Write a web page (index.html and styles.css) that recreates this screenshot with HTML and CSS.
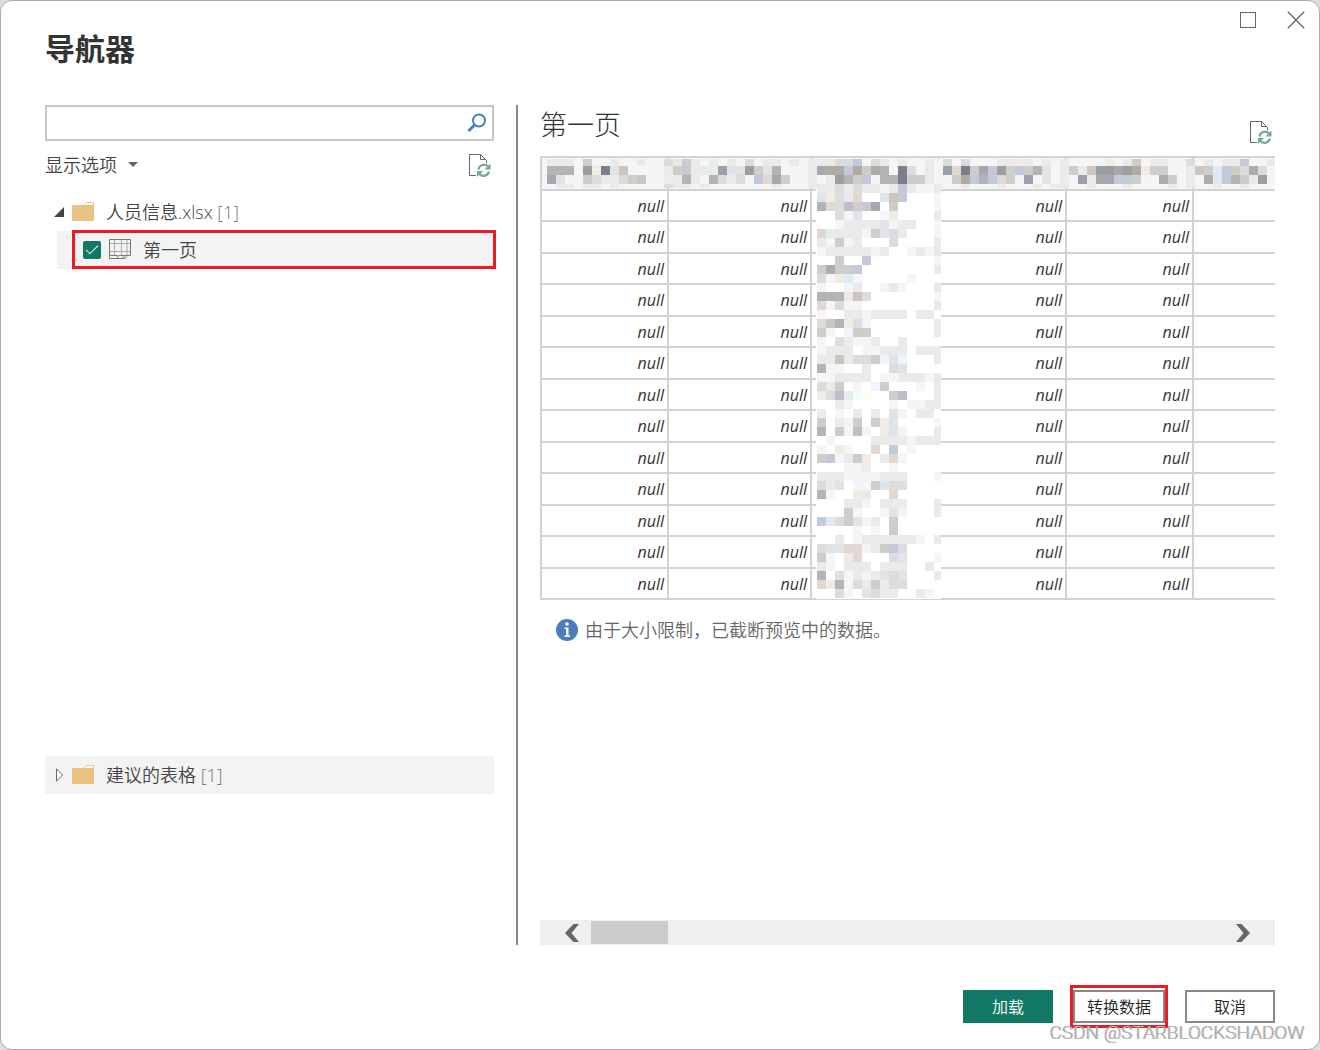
FILE: index.html
```html
<!DOCTYPE html>
<html lang="zh-CN">
<head>
<meta charset="utf-8">
<meta name="viewport" content="width=device-width, initial-scale=1">
<title>导航器</title>
<link rel="stylesheet" href="styles.css">
</head>
<body>
<svg class="defs" aria-hidden="true">
  <symbol id="folder" viewBox="0 0 22 19">
    <path d="M11.500 3.500 L14.500 .5 H21.500 V4" fill="#fff" stroke="#e9c282"/>
    <path d="M1 3 H12 L13 2.500 H22 V19 H0 V4 Z" fill="#e9c282"/>
    <path d="M12.500 2.800 L14.800 1 H21 V2.800 Z" fill="#fff"/>
  </symbol>
  <symbol id="refresh" viewBox="0 0 22 24">
    <path d="M7 22.500 H.5 V1.500 H11.500 L17.500 7.500 V10 M11.500 1.500 V6.500 H17" fill="none" stroke="#666"/>
    <path d="M9.500 16.500 A5.500 5.500 0 0 1 19 13.500 M20 18.500 A5.500 5.500 0 0 1 10.500 21" fill="none" stroke="#76a896" stroke-width="2.200"/>
    <path d="M21.500 10.500 V16.500 H15.500 Z M8 24 V18 H14 Z" fill="#76a896"/>
  </symbol>
</svg>
<div class="dialog">
  <header class="titlebar">
    <h1 class="title">导航器</h1>
    <div class="window-controls">
      <button class="icon-button" type="button" aria-label="最大化"><svg width="18" height="18"><rect x="1.500" y="1.500" width="15" height="15" fill="none" stroke="#666"/></svg></button>
      <button class="icon-button" type="button" aria-label="关闭"><svg width="18" height="18"><path d="M.8 .8 L17.200 17.200 M17.200 .8 L.8 17.200" fill="none" stroke="#666" stroke-width="1.300"/></svg></button>
    </div>
  </header>

  <main class="content">
    <section class="sources">
      <div class="search">
        <input class="search-input" type="text" aria-label="搜索">
        <button class="icon-button" type="button" aria-label="搜索"><svg width="20" height="20" fill="none" stroke="#4a7ebb"><circle cx="12" cy="7.500" r="6" stroke-width="2"/><path d="M7.500 12 L1.500 18" stroke-width="3"/></svg></button>
      </div>
      <div class="options">
        <button class="options-button" type="button">显示选项<svg width="10" height="6"><path d="M0 0 H10 L5 5 Z" fill="#666"/></svg></button>
        <button class="icon-button" type="button" aria-label="刷新"><svg width="22" height="24"><use href="#refresh"/></svg></button>
      </div>
      <div class="tree">
        <div class="node">
          <button class="icon-button" type="button" aria-label="折叠"><svg width="10" height="10"><path d="M10 0 V10 H0 Z" fill="#444"/></svg></button>
          <svg class="folder" width="22" height="19"><use href="#folder"/></svg>
          <span class="label">人员信息.xlsx <span class="count">[1]</span></span>
        </div>
        <div class="node-child">
          <div class="highlight">
            <input class="tick" type="checkbox" id="sheet1" checked>
            <svg width="22" height="21" fill="none" stroke="#777"><path d="M5.500 1 V16 M12.500 1 V17 M18 1 V16 M1 4.500 H21 M1 12.500 H21" stroke="#aaa"/><path d="M.5 .5 H21.500 V16.500 H18 L16 19.500 H13 M13 16.500 H18 M12.500 16.500 L10 16.500 L7 19.500 H.5 V.5 M1 16.500 H9 M7 19.500 H13 L16 16.500"/></svg>
            <label class="sheet-name" for="sheet1">第一页</label>
          </div>
        </div>
      </div>
      <div class="suggested">
        <div class="node node-shaded">
          <button class="icon-button" type="button" aria-label="展开"><svg width="10" height="14"><path d="M2.500 .8 L8.500 7 L2.500 13.200 Z" fill="#fff" stroke="#666"/></svg></button>
          <svg class="folder" width="22" height="19"><use href="#folder"/></svg>
          <span class="label">建议的表格 <span class="count">[1]</span></span>
        </div>
      </div>
    </section>

    <div class="divider"></div>

    <section class="preview">
      <div class="preview-head">
        <h2 class="preview-title">第一页</h2>
        <button class="icon-button" type="button" aria-label="刷新预览"><svg width="22" height="24"><use href="#refresh"/></svg></button>
      </div>
      <div class="table-wrap">
        <table class="grid">
          <colgroup><col class="w-edge"><col class="w-wide"><col class="w-masked"><col class="w-edge"><col class="w-edge"><col></colgroup>
          <thead><tr><th></th><th></th><th></th><th></th><th></th><th></th></tr></thead>
          <tbody>
            <tr><td>null</td><td>null</td><td></td><td>null</td><td>null</td><td></td></tr>
            <tr><td>null</td><td>null</td><td></td><td>null</td><td>null</td><td></td></tr>
            <tr><td>null</td><td>null</td><td></td><td>null</td><td>null</td><td></td></tr>
            <tr><td>null</td><td>null</td><td></td><td>null</td><td>null</td><td></td></tr>
            <tr><td>null</td><td>null</td><td></td><td>null</td><td>null</td><td></td></tr>
            <tr><td>null</td><td>null</td><td></td><td>null</td><td>null</td><td></td></tr>
            <tr><td>null</td><td>null</td><td></td><td>null</td><td>null</td><td></td></tr>
            <tr><td>null</td><td>null</td><td></td><td>null</td><td>null</td><td></td></tr>
            <tr><td>null</td><td>null</td><td></td><td>null</td><td>null</td><td></td></tr>
            <tr><td>null</td><td>null</td><td></td><td>null</td><td>null</td><td></td></tr>
            <tr><td>null</td><td>null</td><td></td><td>null</td><td>null</td><td></td></tr>
            <tr><td>null</td><td>null</td><td></td><td>null</td><td>null</td><td></td></tr>
            <tr><td>null</td><td>null</td><td></td><td>null</td><td>null</td><td></td></tr>
          </tbody>
        </table>
        <svg class="mosaic" id="mosaic" shape-rendering="crispEdges" aria-hidden="true"></svg>
      </div>
      <p class="notice">
        <svg width="22" height="22"><circle cx="11" cy="11" r="11" fill="#4a7ebb"/><circle cx="11" cy="5" r="1.800" fill="#fff"/><path d="M8.500 8.500 H12.500 V16.500 H14 V18 H8.500 V16.500 H10 V10 H8.500 Z" fill="#fff"/></svg>
        由于大小限制，已截断预览中的数据。
      </p>
      <div class="scrollbar">
        <button class="icon-button" type="button" aria-label="向左滚动"><svg width="14" height="18"><path d="M8.500 0 H14 L6.500 9 L14 18 H8.500 L0 9 Z" fill="#666"/></svg></button>
        <div class="thumb"></div>
        <button class="icon-button scroll-right" type="button" aria-label="向右滚动"><svg width="14" height="18"><path d="M5.500 0 H0 L7.500 9 L0 18 H5.500 L14 9 Z" fill="#666"/></svg></button>
      </div>
    </section>
  </main>

  <footer class="actions">
    <button class="button button-primary" type="button">加载</button>
    <div class="button-mark"><button class="button" type="button">转换数据</button></div>
    <button class="button" type="button">取消</button>
  </footer>
  <div class="watermark">CSDN @STARBLOCKSHADOW</div>
</div>
<script src="mosaic.js"></script>
</body>
</html>
```
FILE: styles.css
```css
* {
  box-sizing: border-box;
}

body {
  margin: 0;
  background: #dcdcdc;
  color: #444;
  font: 18px/24px "Open Sans", "Noto Sans CJK SC", sans-serif;
}

h1, h2, p {
  margin: 0;
}

button {
  font: inherit;
  color: inherit;
}

svg {
  display: block;
  flex: none;
}

.defs {
  position: absolute;
  width: 0;
  height: 0;
}

.dialog {
  position: relative;
  display: flex;
  flex-direction: column;
  min-height: 100vh;
  border: 1px solid #aaa;
  border-radius: 12px;
  background: #fff;
}

.icon-button {
  display: block;
  flex: none;
  padding: 0;
  border: 0;
  background: none;
}

/* title bar */
.titlebar {
  display: flex;
  justify-content: space-between;
  height: 104px;
  padding: 10px 14px 0 44px;
}

.title {
  padding-top: 18px;
  color: #333;
  font-size: 30px;
  line-height: 40px;
  font-weight: 700;
}

.window-controls {
  display: flex;
  align-items: flex-start;
  gap: 30px;
}

/* two panes */
.content {
  display: grid;
  grid-template-columns: minmax(0, 449fr) 2px minmax(0, 735fr);
  column-gap: 22px;
  flex: 1;
  padding: 0 44px;
}

.divider {
  background: #888;
}

.sources,
.preview {
  display: flex;
  flex-direction: column;
}

.search {
  display: flex;
  align-items: center;
  height: 36px;
  padding-right: 5px;
  border: 2px solid #c6c6c6;
}

.search-input {
  flex: 1;
  min-width: 0;
  height: 30px;
  padding: 0 8px;
  border: 0;
  outline: 0;
  background: none;
  font: inherit;
}

.options {
  display: flex;
  align-items: center;
  justify-content: space-between;
  height: 48px;
  padding-right: 3px;
}

.options-button {
  display: flex;
  align-items: center;
  gap: 11px;
  padding: 0;
  border: 0;
  background: none;
  font-weight: 350;
}

.tree {
  flex: 1;
  padding-top: 4px;
}

.node {
  display: flex;
  align-items: center;
  height: 38px;
  padding-left: 9px;
}

.node-shaded {
  background: #f3f3f3;
}

.folder {
  margin: 0 12px 2px 8px;
}

.label,
.sheet-name {
  font-weight: 350;
}

.count {
  color: #777;
}

.node-child {
  display: flow-root;
  margin-left: 12px;
  padding-left: 15px;
  background: #f3f3f3;
}

/* the outline reaches one pixel above the row and two past its end */
.highlight {
  display: flex;
  align-items: center;
  height: 39px;
  margin: -1px -2px 0 0;
  padding-left: 8px;
  border: 3px solid #ed1c24;
}

.tick {
  display: grid;
  place-items: center;
  appearance: none;
  width: 18px;
  height: 18px;
  margin: 0 8px 0 0;
  border-radius: 2px;
  background: #117865;
}

.tick:checked::before {
  content: "";
  width: 11px;
  height: 5px;
  margin-bottom: 4px;
  border: solid #fff;
  border-width: 0 0 1px 1px;
  transform: rotate(-45deg);
}

.sheet-name {
  margin-left: 12px;
}

.suggested {
  height: 189px;
}

/* preview */
.preview-head {
  display: flex;
  align-items: center;
  justify-content: space-between;
  height: 51px;
  padding-right: 3px;
}

.preview-head .icon-button {
  margin-top: 2px;
}

.preview-title {
  padding-bottom: 12px;
  color: #333;
  font-size: 27px;
  line-height: 36px;
  font-weight: 300;
}

.table-wrap {
  position: relative;
  overflow: hidden;
}

.grid {
  width: 100%;
  table-layout: fixed;
  border-spacing: 0;
  border: solid #d3d3d3;
  border-width: 2px 0 0 2px;
}

.w-edge {
  width: 127px;
}

.w-masked {
  width: 128px;
}

.w-wide {
  width: 143px;
}

.grid th,
.grid td {
  height: 31px;
  padding: 0 3px;
  border: solid #d3d3d3;
  border-width: 0 2px 2px 0;
  color: #333;
  font-size: 16px;
  line-height: 24px;
  font-style: italic;
  text-align: right;
}

.grid tr:nth-child(even) td {
  height: 32px;
}

.grid th {
  height: 33px;
  background: #f5f5f5;
}

.grid th:last-child,
.grid td:last-child {
  border-right: 0;
}

.mosaic {
  position: absolute;
  inset: 0;
  width: 100%;
  height: 100%;
}

.notice {
  display: flex;
  align-items: center;
  gap: 7px;
  margin-top: 18px;
  padding-left: 16px;
  color: #666;
  font-weight: 350;
}

.scrollbar {
  display: flex;
  align-items: center;
  height: 25px;
  margin-top: auto;
  padding: 0 25px;
  background: #efefef;
}

.thumb {
  width: 77px;
  height: 23px;
  margin-left: 12px;
  background: #cbcbcb;
}

.scroll-right {
  margin-left: auto;
}

/* footer */
.actions {
  display: flex;
  align-items: center;
  justify-content: flex-end;
  gap: 17px;
  padding: 40px 44px 21px;
}

.button {
  width: 90px;
  height: 33px;
  padding: 0;
  border: 2px solid #888;
  background: #fff;
  color: #222;
  font-size: 16px;
  font-weight: 350;
}

.button-primary {
  border-color: #117865;
  background: #117865;
  color: #fff;
}

.button-mark {
  padding: 2px 0;
  border: 3px solid #ed1c24;
}

.button-mark .button {
  display: block;
  width: 92px;
}

.watermark {
  position: absolute;
  right: 14px;
  bottom: 4px;
  color: #bbb;
  font: 300 19px/24px Roboto, sans-serif;
  text-shadow: -1px 0 0 #999;
}
```
FILE: mosaic.js
```js
// Pixelated cover over the header cells and the third column.
const shades = {
  a: "#f5f5f5", b: "#eaeaea", c: "#dcdcdc", d: "#cdcdcc", e: "#b3b4b5", f: "#9d9e9f",
  g: "#e0e3e8", h: "#c3cad7", i: "#9aa1ab", j: "#7c7e8b", k: "#f0ebe5", l: "#e2d8d1",
  m: "#cec5be", n: "#b2aaa5", p: "#dedde3", q: "#c0bdc8", r: "#a7a7ae", s: "#e4ecec",
  t: "#f0f5fa", u: "#dceaf4", v: "#ebffff", w: "#fffcf2"
};
const size = 9;
const svg = document.getElementById("mosaic");

function rect(x, y, width, height, fill) {
  const r = document.createElementNS("http://www.w3.org/2000/svg", "rect");
  Object.entries({ x, y, width, height, fill }).forEach(([k, v]) => r.setAttribute(k, v));
  svg.appendChild(r);
}

function row(text, x, y, height, limit = Infinity) {
  [...text].forEach((key, i) => {
    const left = x + i * size;
    if (shades[key]) rect(left, y, Math.min(size, limit - left), height, shades[key]);
  });
}

const header = [
  [3, 7, "bbbadaabaabaacbdbasabactbbabab" + "bbcchacbabaaba" + "cacaaabbkbabab" + "aaaakabdabbaac" + "ababbhaab"],
  [10, 9, "eeeafkjgmtaaabdhbsbiggfdgeaaab" + "rnnhndneajcaba" + "iljdrhfdhdegab" + "dsmffrfnkddaab" + "mduhdcnca"],
  [19, 9, "rgaadcbbldmaakbebaecbcahlrdaab" + "asfedhaeejddba" + "adnhehldaiagak" + "aibrrhhdaandab" + "anuhedbft"],
  [28, 4, "abbabbabaaaaacbbabaaaaaaabaaab" + "bbcbcbbabhbaab" + "aabaaabaaababb" + "aabaaabaaaabab" + "aabaabaaa"]
];
header.forEach(([y, h, text]) => row(text, 7, y, h));

const column = `bbcbcbbabhbaab
gkpbl..gmh...a
elcqdhr.d....a
..cag..ak....b
..abbbbgabb..a
lsbbbadgcb...a
badas...c....b
abbbbbab..abab
..d..h.......a
dnddh........b
cakua.....a...
a..ab..aba...b
eeebmc.......a
lacaa........b
a..bbabbbb.bb.
cmekpt.......b
da.tdd.......b
a.pkaab..b....
abbb.aabbb.bbb
bsmbccdtgt...b
eaa..b..cg....
aabbbb.aabbbab
cbd.a.td...a.b
kcqsvw..dq...b
..ba....a.aabb
b.a.b.b.gt.bb.
d.ktd.dkg....a
e.daqa.kgt...b
.a....bbbbabbb
a.ka..l.h.a...
dhabdk.blt....
...aak..a.....
bbbaaaabbb...a
cbg.tadgcp....
ea..ks..l.....
...bba.bbb...b
...da..agt...b
hucdgtb.d.....
....a.a.d.....
..b.abbbbbba.b
cgglltbdhp....
da.bl...cg...a
ba.bbb.bbb..b.
e.pabtbgcg...b
lkeacbdkcc....
..ca.gcbb..ba.`.split("\n");
rect(276, 32, 125, 411, "#fff");
column.forEach((text, i) => row(text, 277, 28 + i * size, size, 401));
```
